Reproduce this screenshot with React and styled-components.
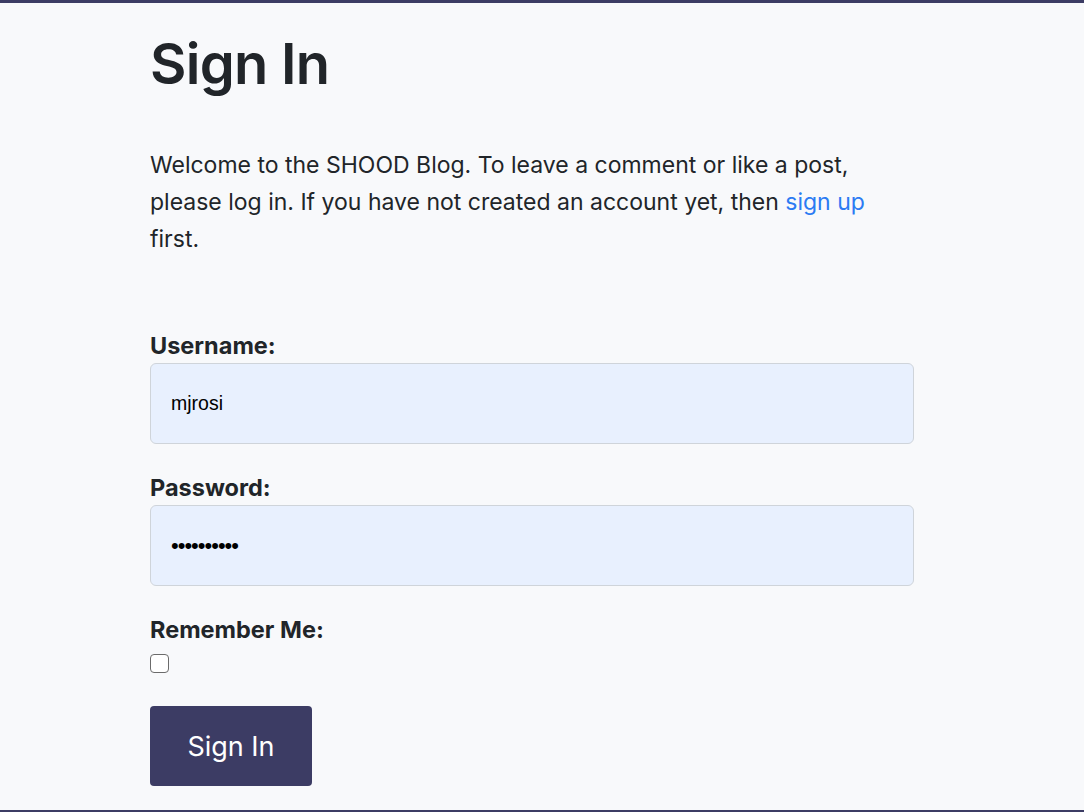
import React from "react";
import styled, { createGlobalStyle } from "styled-components";

const Global = createGlobalStyle`
  html, body { margin: 0; padding: 0; }
  body {
    background: #f8f9fb;
    font-family: Inter, "Noto Sans", sans-serif;
    color: #212529;
  }
`;

const Page = styled.div`
  min-height: 812px;
  box-sizing: border-box;
  border-top: 3px solid #3c3c64;
  display: flex;
  flex-direction: column;
`;

const Main = styled.main`
  flex: 1;
  padding: 0 0 24px 150px;
`;

const Content = styled.div`
  width: 764px;
`;

const Title = styled.h1`
  margin: 28px 0 0;
  font-size: 56px;
  font-weight: 600;
  line-height: 1.2;
  letter-spacing: -0.7px;
`;

const Intro = styled.p`
  margin: 49px 0 0;
  font-size: 23px;
  line-height: 37px;
  max-width: 745px;
`;

const Link = styled.a`
  color: #2b7bf3;
  text-decoration: none;
`;

const Form = styled.form`
  margin-top: 73px;
  display: flex;
  flex-direction: column;
`;

const Field = styled.div`
  display: flex;
  flex-direction: column;
  margin-bottom: ${(p) => p.$gap || 29}px;
`;

const Label = styled.label`
  font-size: 23.5px;
  font-weight: 700;
  line-height: 30px;
  margin-bottom: 2px;
`;

const Input = styled.input`
  box-sizing: border-box;
  width: 100%;
  height: 81px;
  padding: 0 20px;
  border: 1px solid #cfd4da;
  border-radius: 6px;
  background: #e8f0fe;
  font-family: "Liberation Sans", Arial, sans-serif;
  font-size: ${(p) => (p.type === "password" ? "22px" : "19.5px")};
  letter-spacing: ${(p) => (p.type === "password" ? "-1px" : "0")};
  color: #000;
  outline: none;
`;

const Check = styled.input`
  width: 19px;
  height: 19px;
  margin: 7px 0 0;
  appearance: none;
  border: 1.5px solid #6b6b6b;
  border-radius: 4px;
  background: #fff;
  box-sizing: border-box;
`;

const Button = styled.button`
  align-self: flex-start;
  width: 162px;
  height: 80px;
  border: none;
  border-radius: 4px;
  background: #3c3c64;
  color: #fff;
  font-family: Inter, sans-serif;
  font-size: 27px;
  font-weight: 400;
  cursor: pointer;
`;

const Footer = styled.footer`
  height: 2px;
  background: #3c3c64;
`;

export default function App() {
  return (
    <Page>
      <Global />
      <Main>
        <Content>
          <Title>Sign In</Title>
          <Intro>
            Welcome to the SHOOD Blog. To leave a comment or like a post, please log in. If
            you have not created an account yet, then <Link href="#">sign up</Link> first.
          </Intro>
          <Form onSubmit={(e) => e.preventDefault()}>
            <Field>
              <Label htmlFor="u">Username:</Label>
              <Input id="u" type="text" defaultValue="mjrosi" />
            </Field>
            <Field>
              <Label htmlFor="p">Password:</Label>
              <Input id="p" type="password" defaultValue="abcdefghij" />
            </Field>
            <Field $gap={33}>
              <Label htmlFor="r">Remember Me:</Label>
              <Check id="r" type="checkbox" />
            </Field>
            <Button type="submit">Sign In</Button>
          </Form>
        </Content>
      </Main>
      <Footer />
    </Page>
  );
}
